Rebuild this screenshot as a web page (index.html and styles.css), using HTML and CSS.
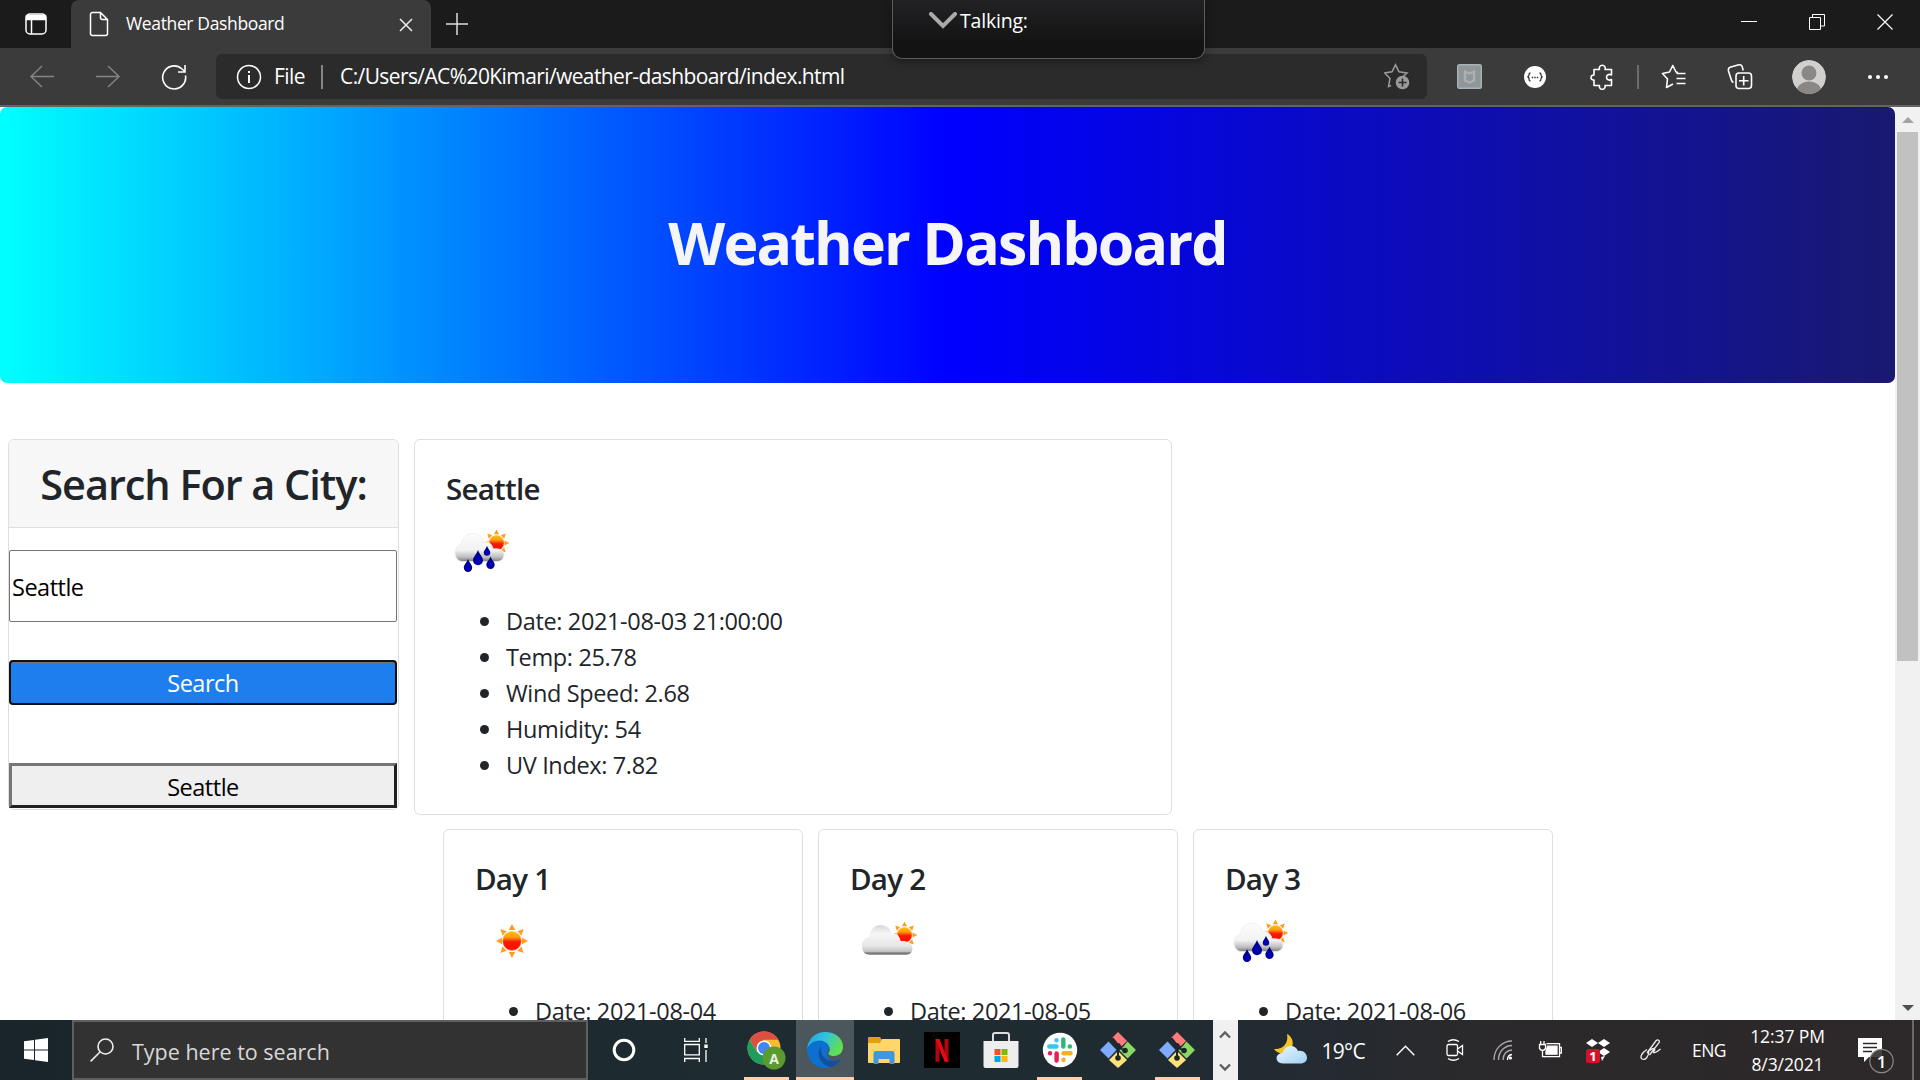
FILE: index.html
```html
<!DOCTYPE html>
<html lang="en">
<head>
<meta charset="utf-8">
<title>Weather Dashboard</title>
<link rel="stylesheet" href="styles.css">
</head>
<body>
<svg class="defs" width="0" height="0">
  <defs>
    <linearGradient id="sunFill" x1="0" y1="0" x2="0" y2="1"><stop offset="0" stop-color="#ffc400"/><stop offset=".3" stop-color="#ff9a10"/><stop offset=".55" stop-color="#f81800"/><stop offset="1" stop-color="#ff0a00"/></linearGradient>
    <linearGradient id="cloudFill" x1="0" y1="0" x2="0" y2="1"><stop offset="0" stop-color="#d8d8d8"/><stop offset=".3" stop-color="#f6f6f6"/><stop offset=".7" stop-color="#e6e6e6"/><stop offset=".88" stop-color="#c4c4c4"/><stop offset=".94" stop-color="#707070"/><stop offset="1" stop-color="#aaa"/></linearGradient>
    <linearGradient id="rainCloudFill" x1="0" y1="0" x2="0" y2="1"><stop offset="0" stop-color="#fcfcfc"/><stop offset=".6" stop-color="#f2f2f2"/><stop offset=".85" stop-color="#bcbcbc"/><stop offset="1" stop-color="#777"/></linearGradient>
    <radialGradient id="dropFill" cx=".5" cy=".65" r=".5"><stop offset="0" stop-color="#0000d8"/><stop offset="1" stop-color="#000078"/></radialGradient>
    <linearGradient id="edgeTop" x1="0" y1="0" x2="1" y2=".4"><stop offset="0" stop-color="#1f9fe0"/><stop offset=".5" stop-color="#2fc3e0"/><stop offset="1" stop-color="#5fe04f"/></linearGradient>
    <linearGradient id="moonCloud" x1="0" y1="0" x2="1" y2="1"><stop offset="0" stop-color="#e8f6ff"/><stop offset="1" stop-color="#9fd2f2"/></linearGradient>
    <g id="sun">
      <path fill="#ff9d1e" d="M0-17l3.200 6h-6.400zM0 17l3.200-6h-6.400zM-16 0l6-3.200v6.400zM16 0l-6-3.200v6.400zM-11.600-12l6.200 2.200-4.200 4.400zM11.600-12l-6.200 2.200 4.200 4.400zM-11.600 12l6.200-2.200-4.200-4.400zM11.600 12l-6.200-2.200 4.200-4.400z"/>
      <circle r="9.400" fill="url(#sunFill)" stroke="#ffae50" stroke-width=".6"/>
    </g>
    <g id="rain">
      <use href="#sun" transform="translate(50.500 29) scale(.8)"/>
      <path fill="url(#rainCloudFill)" stroke="#eee" stroke-width=".8" d="M17 47.500c-5 0-8-4-8-8.600 0-4.500 3-8 6.500-9 .5-6 5-10.500 11-10.500 6 0 10 3.500 11.500 8.500 5-1 8.500 3 9 7 6-.5 11 1 11 5.500 0 4-2.500 7-7 7z"/>
      <g fill="url(#dropFill)">
        <path d="M22 45c1.500 4 4.200 6 4.200 8.800a4.200 4.200 0 0 1-8.400 0C17.800 51 20.500 49 22 45z"/>
        <path d="M32 36c1.800 5 5 7 5 10.200a5 5 0 0 1-10 0C27 43 30.200 41 32 36z"/>
        <path d="M41 32c1.200 3 3.200 4.500 3.200 6.500a3.200 3.200 0 0 1-6.400 0C37.800 36.500 39.800 35 41 32z"/>
        <path d="M44.500 42.500c1.500 4 4.200 5.500 4.200 8.300a4.200 4.200 0 0 1-8.400 0c0-2.800 2.700-4.300 4.200-8.300z"/>
      </g>
    </g>
    <g id="git">
      <g transform="rotate(45 18 18)">
        <rect x="5.500" y="5.500" width="11.500" height="9" rx="1" fill="#ff7b7b"/>
        <rect x="19" y="5.500" width="11.500" height="11.500" rx="1" fill="#7ed957"/>
        <rect x="5.500" y="19" width="11.500" height="11.500" rx="1" fill="#7eaaff"/>
        <rect x="19" y="19" width="11.500" height="11.500" rx="1" fill="#ffe27a"/>
      </g>
      <path d="M12.500 6L18 13v13M18 14.500l6 4" stroke="#1c272c" stroke-width="2.200" fill="none"/>
      <circle cx="18" cy="13.500" r="2.600" fill="#1c272c"/><circle cx="25" cy="18.500" r="2.800" fill="#1c272c"/><circle cx="18" cy="26" r="2.800" fill="#1c272c"/>
    </g>
    <g id="gitTiles">
      <path d="M18 0l9 9-5 5-4-1.500-6-6.500z" fill="#ff7b7b"/>
      <path d="M27.500 9.500L36 18l-8.500 8.500-8-8 4-4z" fill="#8ad762"/>
      <path d="M8.500 9.500l8 8.500-8 8.500L0 18z" fill="#7eaaff"/>
      <path d="M18 19l9 9-9 8-9-8z" fill="#ffe27a"/>
    </g>
  </defs>
</svg>
<div class="screen">
  <header class="tabstrip">
    <div class="tab-menu"><svg width="24" height="24" viewBox="0 0 24 24" fill="none" stroke="#fff" stroke-width="1.500"><rect x="2" y="2" width="20" height="20" rx="4"/><path d="M2.500 3.500h19v4h-19z" fill="#fff"/><path d="M7.500 8v14"/></svg></div>
    <div class="tab">
      <svg width="20" height="26" viewBox="0 0 20 26" fill="none" stroke="#fff" stroke-width="1.500"><path d="M11.500 1.500H3.500a2 2 0 0 0-2 2v19a2 2 0 0 0 2 2h13a2 2 0 0 0 2-2V8.500zv5a2 2 0 0 0 2 2h5"/></svg>
      <span class="t tab-title">Weather Dashboard</span>
      <svg class="tab-close" width="14" height="14" viewBox="0 0 14 14" stroke="#eee" stroke-width="1.500"><path d="M1 1l12 12M13 1L1 13"/></svg>
    </div>
    <div class="new-tab"><svg width="22" height="22" viewBox="0 0 22 22" stroke="#ddd" stroke-width="1.500"><path d="M11 0v22M0 11h22"/></svg></div>
    <div class="window-buttons">
      <svg width="16" height="16" viewBox="0 0 16 16" stroke="#fff" fill="none"><path d="M0 7.500h16"/></svg>
      <svg width="16" height="16" viewBox="0 0 16 16" stroke="#fff" fill="none"><path d="M.5 3.500h11v12H.5zM3.500 3.500v-3h12v11.500h-4"/></svg>
      <svg width="16" height="16" viewBox="0 0 16 16" stroke="#fff" fill="none" stroke-width="1.200"><path d="M.5.5l15 15M15.500.5l-15 15"/></svg>
    </div>
  </header>

  <nav class="toolbar">
    <div><svg width="24" height="24" viewBox="0 0 24 24" fill="none" stroke="#858585" stroke-width="1.400"><path d="M24 11.500H1M12 1L1 11.500l11 10.500"/></svg></div>
    <div><svg width="24" height="24" viewBox="0 0 24 24" fill="none" stroke="#858585" stroke-width="1.400"><path d="M0 11.500h23M12 1l11 10.500L12 22"/></svg></div>
    <div><svg width="26" height="26" viewBox="0 0 26 26" fill="none" stroke="#fff" stroke-width="1.600"><path d="M24.500 11.500A11.500 11.500 0 1 1 21 5l3 2.500M24 1v7h-7"/></svg></div>
    <div class="omnibox">
      <svg width="26" height="26" viewBox="0 0 26 26" fill="none" stroke="#fff" stroke-width="1.500"><circle cx="13" cy="13" r="11.500"/><path d="M13 11v8M13 7v2" stroke-width="2"/></svg>
      <span class="t scheme">File</span>
      <i class="omni-sep"></i>
      <span class="t url">C:/Users/AC%20Kimari/weather-dashboard/index.html</span>
      <svg width="26" height="27" viewBox="0 0 26 27" fill="none" stroke="#9a9a9a" stroke-width="1.500"><path d="M7 22.500l-2.500 1 1.500-8L.8 10 8 8.800l3.500-7 3.500 7 8 1.200-4 3.500"/><circle cx="18.500" cy="19.500" r="6.800" fill="#9a9a9a" stroke="none"/><path d="M18.500 15.500v8M14.500 19.500h8" stroke="#2b2b2b" stroke-width="1.600"/></svg>
    </div>
    <div class="ext"><svg width="25" height="25" viewBox="0 0 25 25"><rect x=".7" y=".7" width="23.600" height="23.600" rx="1.500" fill="#929696" stroke="#a5b3ba" stroke-width="1.400"/><path d="M8 7.500l4.500 2 4.500-2v9l-4.500 2-4.500-2z" fill="none" stroke="#a9b1b4" stroke-width="2.400"/></svg></div>
    <div><svg width="24" height="24" viewBox="0 0 24 24"><circle cx="12" cy="12" r="11" fill="#fff"/><path d="M7.500 8q-1.500 0-1.500 1.700T4.500 12q1.500 0 1.500 2T7.500 16M16.500 8q1.500 0 1.500 1.700t1.500 2.300q-1.500 0-1.500 2t-1.500 2" fill="none" stroke="#333" stroke-width="1.300"/><path d="M8.800 12.500h1.400M11.300 12.500h1.400M13.800 12.500h1.400" stroke="#333" stroke-width="1.300"/></svg></div>
    <div><svg width="24" height="26" viewBox="0 0 24 26" fill="none" stroke="#fff" stroke-width="1.600" stroke-linejoin="round"><path d="M4 5.500h5.500a3 3 0 1 1 5.500 0h6.500v5.500c-2.500-1.500-5 0-5 2.200s2.500 3.800 5 2.300v6H15a2.900 2.900 0 1 1-5.500 0H4v-5.500c-4 .5-4-5 0-5z"/></svg></div>
    <i class="bar-sep"></i>
    <div><svg width="26" height="25" viewBox="0 0 26 25" fill="none" stroke="#fff" stroke-width="1.600" stroke-linejoin="round"><path d="M17 8.500L15 8l-3.200-6.500L8.500 8 1.500 9.500l5 5.500-1 8.500 6.500-3.500M15.500 9.500h9M15.500 14.500h9M15.500 19.500h9"/></svg></div>
    <div><svg width="26" height="26" viewBox="0 0 26 26" fill="none" stroke="#fff" stroke-width="1.600"><rect x="9" y="9" width="15.500" height="15.500" rx="3"/><path d="M16.700 12v9.500M12 16.700h9.500M6.500 18.500C5 18 4.500 17 4.200 15.500L1.500 7c-.5-2 0-3 1.500-3.700L11 1c2-.5 3.500 0 4.200 1.500l1 4"/></svg></div>
    <div><svg width="34" height="34" viewBox="0 0 34 34"><clipPath id="avatarClip"><circle cx="17" cy="17" r="17"/></clipPath><g clip-path="url(#avatarClip)"><circle cx="17" cy="17" r="17" fill="#d2d0ce"/><circle cx="17" cy="13" r="7.500" fill="#8a8785"/><ellipse cx="17" cy="32" rx="12.500" ry="10.500" fill="#8a8785"/></g></svg></div>
    <div><svg width="24" height="8" viewBox="0 0 24 8" fill="#fff"><circle cx="4" cy="4" r="2"/><circle cx="12" cy="4" r="2"/><circle cx="20" cy="4" r="2"/></svg></div>
  </nav>

  <div class="talking">
    <svg width="28" height="17" viewBox="0 0 28 17" fill="none" stroke="#aaa" stroke-width="4" stroke-linecap="round"><path d="M2 2l12 12L26 2"/></svg>
    <span class="t talk-text">Talking:</span>
  </div>

  <div class="viewport">
    <main class="page">
      <h1 class="banner"><span class="t">Weather Dashboard</span></h1>
      <div class="columns">
        <aside class="search-card">
          <h2><span class="t">Search For a City:</span></h2>
          <div class="field"><span class="t">Seattle</span></div>
          <div class="search-btn"><span class="t">Search</span></div>
          <div class="history-btn"><span class="t">Seattle</span></div>
        </aside>
        <section class="results">
          <article class="card current">
            <h3><span class="t">Seattle</span></h3>
            <svg class="wx" viewBox="0 0 75 75"><use href="#rain"/></svg>
            <ul>
              <li><span class="t">Date: 2021-08-03 21:00:00</span></li>
              <li><span class="t">Temp: 25.78</span></li>
              <li><span class="t">Wind Speed: 2.68</span></li>
              <li><span class="t">Humidity: 54</span></li>
              <li><span class="t">UV Index: 7.82</span></li>
            </ul>
          </article>
          <div class="forecast">
            <article class="card">
              <h3><span class="t">Day 1</span></h3>
              <svg class="wx" viewBox="0 0 75 75"><use href="#sun" x="37" y="37"/></svg>
              <ul><li><span class="t">Date: 2021-08-04</span></li></ul>
            </article>
            <article class="card">
              <h3><span class="t">Day 2</span></h3>
              <svg class="wx" viewBox="0 0 75 75"><use href="#sun" transform="translate(54.500 31) scale(.8)"/><path fill="url(#cloudFill)" d="M20 51c-5 0-8-3.500-8-9 0-5 3-8.500 7-9 .5-6 5-12 11.500-12 6 0 10 4 11 8.500 5-1 8.500 3 9 7.500 6-.5 12 2 12 7 0 4.500-3 7-7.500 7z"/></svg>
              <ul><li><span class="t">Date: 2021-08-05</span></li></ul>
            </article>
            <article class="card">
              <h3><span class="t">Day 3</span></h3>
              <svg class="wx" viewBox="0 0 75 75"><use href="#rain"/></svg>
              <ul><li><span class="t">Date: 2021-08-06</span></li></ul>
            </article>
          </div>
        </section>
      </div>
    </main>
    <div class="scrollbar">
      <svg width="12" height="6" viewBox="0 0 12 6"><path d="M0 6l6-6 6 6z" fill="#a3a3a3"/></svg>
      <i class="thumb"></i>
      <svg width="12" height="6" viewBox="0 0 12 6"><path d="M0 0l6 6 6-6z" fill="#505050"/></svg>
    </div>
  </div>

  <footer class="taskbar">
    <div><svg width="24" height="24" viewBox="0 0 24 24" fill="#fff"><path d="M0 3.300l10-1.400v9.600H0zM11 1.700L24 0v11.500H11zM0 12.500h10v9.600L0 20.700zM11 12.500h13V24l-13-1.700z"/></svg></div>
    <div class="task-search">
      <svg width="24" height="24" viewBox="0 0 24 24" fill="none" stroke="#eee" stroke-width="1.600"><circle cx="15.500" cy="8.500" r="7.500"/><path d="M10 14L.6 23.400"/></svg>
      <span class="t">Type here to search</span>
    </div>
    <div><svg width="24" height="24" viewBox="0 0 24 24"><circle cx="12" cy="12" r="9.800" fill="none" stroke="#fff" stroke-width="3"/></svg></div>
    <div class="task-view"><svg width="24" height="24" viewBox="0 0 24 24" fill="none" stroke="#fff" stroke-width="1.300"><path d="M.7 0v3.300h14.600V0M.7 6.500h14.600v10.300H.7zM.7 24v-3.500h14.600V24M22 0v5M22 12v12"/><path d="M20.300 6.500h3.400v3.500h-3.400z" fill="#fff" stroke="none"/></svg></div>
    <div class="app open"><svg width="40" height="40" viewBox="0 0 40 40"><circle cx="18" cy="18" r="16.500" fill="#fbbc30"/><path d="M3.700 9.800a16.500 16.500 0 0 1 28.600 0H18l-7 12z" fill="#dd4f43"/><path d="M3.700 9.800A16.500 16.500 0 0 0 18 34.500l7-12.500-14 0z" fill="#1e9e5e"/><circle cx="18" cy="18" r="7.500" fill="#fff"/><circle cx="18" cy="18" r="6" fill="#4285f4"/><circle cx="28" cy="28" r="11.500" fill="#5a9a2e"/><text x="28" y="33.500" text-anchor="middle" class="badge-a">A</text></svg></div>
    <div class="app open active"><svg width="36" height="36" viewBox="0 0 36 36"><path d="M0 18C2 8 9 5.500 15 6c8 1 9 7 7 10-5 7 0 17 12 11-3 5-9 9-16 9C8 36 0 28 0 18z" fill="#0d6fd0"/><path d="M0 17C1 7 8 0 18 0c10 0 18 6 18 14.500 0 6-4 9.500-9 9.500-4 0-6-1.500-5.500-3 2-2 1.500-5 0-8C17 6 4 7 0 17z" fill="url(#edgeTop)"/><path d="M14 14c-5 8-1 20 11 21 4-2 7-4.500 9-8-10 5-22 0-20-13z" fill="#124f9c"/></svg></div>
    <div class="app"><svg width="34" height="28" viewBox="0 0 34 28"><path d="M1 2q0-1 1-1h11l2 3v5H1z" fill="#e0a010"/><path d="M1 7h12l2-4h17q1 0 1 1v22q0 1-1 1H2q-1 0-1-1z" fill="#ffd668"/><path d="M6.500 28V17q0-2 2-2h17q2 0 2 2v11h-5v-5h-11v5z" fill="#3f97e0"/></svg></div>
    <div class="app"><svg width="36" height="36" viewBox="0 0 36 36"><path d="M0 0h36v36H0z" fill="#000"/><path d="M11.500 7h4v22.500l-4 .5zM20.500 7h4v23l-4-.5z" fill="#b1060f"/><path d="M11.500 7h4l9 23-4-.5z" fill="#e50914"/></svg></div>
    <div class="app"><svg width="36" height="36" viewBox="0 0 36 36"><path d="M10 11V3q0-2 2-2h12q2 0 2 2v8" fill="none" stroke="#ddd" stroke-width="2"/><path d="M.5 9h35v25q0 2-2 2h-31q-2 0-2-2z" fill="#eee"/><path d="M11.500 17h6v6h-6z" fill="#f25022"/><path d="M18.500 17h6v6h-6z" fill="#7fba00"/><path d="M11.500 24h6v6h-6z" fill="#00a4ef"/><path d="M18.500 24h6v6h-6z" fill="#ffb900"/></svg></div>
    <div class="app open"><svg width="36" height="36" viewBox="0 0 36 36"><circle cx="18" cy="18" r="17.200" fill="#fff"/><g stroke-width="4.400" stroke-linecap="round"><path d="M7.300 14.500h7.200M14.500 8.200v.1" stroke="#36c5f0"/><path d="M21.300 7.500v7M27.800 14.500h.1" stroke="#2eb67d"/><path d="M21.500 21.300h7M21.500 27.800v.1" stroke="#ecb22e"/><path d="M14.600 21.500v7M8 21.300h.1" stroke="#e01e5a"/></g></svg></div>
    <div class="app"><svg width="36" height="36" viewBox="0 0 36 36"><use href="#gitTiles"/><path d="M12.500 6L18 13v13M18 14.500l6 4" stroke="#1c272c" stroke-width="2" fill="none"/><circle cx="18" cy="13.500" r="2.600" fill="#1c272c"/><circle cx="25" cy="18.500" r="2.800" fill="#1c272c"/><circle cx="18" cy="26" r="2.800" fill="#1c272c"/></svg></div>
    <div class="app open"><svg width="36" height="36" viewBox="0 0 36 36"><use href="#gitTiles"/><path d="M12.500 6L18 13v13M18 14.500l6 4" stroke="#1c272c" stroke-width="2" fill="none"/><circle cx="18" cy="13.500" r="2.600" fill="#1c272c"/><circle cx="25" cy="18.500" r="2.800" fill="#1c272c"/><circle cx="18" cy="26" r="2.800" fill="#1c272c"/></svg></div>
    <div class="task-scroll">
      <svg width="12" height="9" viewBox="0 0 12 9" fill="none" stroke="#606060" stroke-width="2.400"><path d="M1 7.500l5-5 5 5"/></svg>
      <svg width="12" height="9" viewBox="0 0 12 9" fill="none" stroke="#606060" stroke-width="2.400"><path d="M1 1.500l5 5 5-5"/></svg>
    </div>
    <div class="tray-weather"><svg width="34" height="30" viewBox="0 0 34 30"><path d="M13 0c8 4 8 16-2 19C6 20 2 18 0 15c8 1 15-5 13-15z" fill="#f7c325"/><path d="M9 29.500c-9 0-8-11 0-10.500 1-8 12-10 15-2 10-2 13 12.500 2 12.500z" fill="url(#moonCloud)"/></svg></div>
    <div class="temp"><span class="t">19°C</span></div>
    <div><svg width="19" height="11" viewBox="0 0 19 11" fill="none" stroke="#fff" stroke-width="1.400"><path d="M.7 10.300l8.800-9 8.800 9"/></svg></div>
    <div><svg width="18" height="24" viewBox="0 0 18 24" fill="none" stroke="#fff" stroke-width="1.300"><rect x="1" y="6.500" width="10.500" height="11" rx="1.500"/><path d="M11.500 11l5-3.500v9l-5-3.500M2 3.500q5-3.500 11 0M2 20.500q5 3.500 11 0"/></svg></div>
    <div><svg width="20" height="20" viewBox="0 0 20 20" fill="none" stroke="#aaa" stroke-width="1.400"><path d="M1 20C1 9 9 1 19 1M5.500 20C5.500 11.500 11.500 5.500 19 5.500M10 20c0-6 4-10 9-10"/><path d="M14.500 20q0-5 4.500-5.500" stroke="#fff"/><circle cx="17.500" cy="18" r="1.600" fill="#fff" stroke="none"/></svg></div>
    <div><svg width="24" height="18" viewBox="0 0 24 18" fill="none" stroke="#fff" stroke-width="1.300"><path d="M8.500 2.700h13v13H6"/><path d="M9.500 5.200h9.500v8H8v-3z" fill="#fff"/><path d="M22 6.500h1.300v5.500H22M1.500 3.500h6v4q-3 4-6 0zM2.700 0v3.500M6 0v3.500M4.500 9.500V15.700H7"/></svg></div>
    <div><svg width="26" height="26" viewBox="0 0 26 26"><path d="M7 2l6 4-6 4-6-4zM19 2l6 4-6 4-6-4zM19 11l6 4-6 4-6-4zM16 20l4-1-3 5z" fill="#fff"/><rect x="1" y="12" width="14" height="14" rx="2.500" fill="#d80f2b"/><text x="8" y="23.800" text-anchor="middle" class="badge-n">1</text></svg></div>
    <div><svg width="22" height="22" viewBox="0 0 22 22" fill="none" stroke="#eee" stroke-width="1.300"><path d="M7 14L16 1.800q1.500-1.500 2.700-.6t.1 2.800L9.500 16M10 11.500c4-3.500 6-2 4 .5s1.500 2.500 6.500-2M7 10.500c-5 3-7.500 7.500-5 9.500 3.500 1.500 6.500-2 7-8.500"/></svg></div>
    <div class="lang"><span class="t">ENG</span></div>
    <div class="clock"><span class="t">12:37 PM</span><span class="t">8/3/2021</span></div>
    <div class="notify"><svg width="40" height="38" viewBox="0 0 40 38"><path d="M2 1h24v19H13l-5 5v-5H2z" fill="#fff"/><path d="M7 6.500h14M7 10.500h14M7 14.500h9" stroke="#2c2828" stroke-width="1.300"/><circle cx="25.500" cy="24" r="11.700" fill="#2c2828" fill-opacity=".88" stroke="#8a8888" stroke-width="1.200"/><text x="25.500" y="30.500" text-anchor="middle" class="badge-c">1</text></svg></div>
    <i class="peek"></i>
  </footer>
</div>
</body>
</html>
```
FILE: styles.css
```css
* { box-sizing: border-box; }
body {
  margin: 0;
  font-family: "Open Sans", "Noto Sans", sans-serif;
  color: #212529;
  background: #fff;
  overflow: hidden;
}
svg { display: block; flex: none; }
.defs { position: absolute; }
.t { white-space: nowrap; }
h1, h2, h3, ul { margin: 0; padding: 0; }

.screen {
  position: relative;
  width: 1920px;
  height: 1080px;
  display: grid;
  grid-template-rows: 48px 59px 913px 60px;
  overflow: hidden;
}

/* Tab strip */
.tabstrip {
  display: grid;
  grid-template-columns: 71px 360px 52px 1fr;
  background: #1b1b1b;
  color: #fff;
}
.tab-menu, .new-tab { display: flex; align-items: center; justify-content: center; }
.tab-menu { padding-left: 1px; background: #1b1b1b; }
.tab {
  display: flex;
  align-items: center;
  padding: 0 18px 0 18px;
  background: #3b3b3b;
  border-radius: 8px 8px 0 0;
}
.tab-title { margin-left: 17px; padding-bottom: 2px; font-size: 17.5px; letter-spacing: -.36px; }
.tab-close { margin-left: auto; margin-top: 2px; }
.new-tab { padding-bottom: 1px; }
.window-buttons {
  display: flex;
  justify-content: flex-end;
  align-items: center;
  gap: 52px;
  padding: 0 27px 4px 0;
}

/* Toolbar */
.toolbar {
  display: grid;
  grid-template-columns: 84px 48px 84px 1211px 76px 64px 70px 2px 70px 62px 76px 62px;
  background: #3b3b3b;
  border-bottom: 2px solid #636363;
  color: #fff;
}
.toolbar > div { display: flex; align-items: center; justify-content: center; }
.toolbar > .ext { padding-left: 8px; }
.toolbar > .omnibox {
  display: grid;
  grid-template-columns: 38px 47px 2px 1fr 26px;
  justify-content: start;
  margin: 6px 0;
  padding: 0 17px 0 20px;
  background: #2b2b2b;
  border-radius: 6px;
  font-size: 21px;
  letter-spacing: -.6px;
}
.scheme, .url { padding-bottom: 1px; }
.omni-sep { width: 2px; height: 24px; background: #858585; }
.url { padding-left: 17px; }
.bar-sep { width: 2px; height: 24px; background: #6c6c6c; align-self: center; }

/* Call overlay */
.talking {
  position: absolute;
  left: 892px;
  top: 0;
  width: 313px;
  height: 59px;
  display: flex;
  align-items: flex-start;
  padding: 12px 0 0 36px;
  gap: 3px;
  color: #fff;
  background: linear-gradient(#222224, #131314 75%);
  border: 1px solid #5c5c5c;
  border-top: 0;
  border-radius: 0 0 10px 10px;
  box-shadow: 0 3px 10px rgba(0, 0, 0, .35);
}
.talk-text { font-size: 19.5px; line-height: 18px; letter-spacing: -.2px; }

/* Page */
.viewport { display: grid; grid-template-columns: 1895px 25px; overflow: hidden; min-height: 0; }
.page { overflow: hidden; height: 913px; }
.banner {
  height: 276px;
  padding-top: 99px;
  text-align: center;
  font-size: 59px;
  line-height: 72px;
  font-weight: 700;
  letter-spacing: -1.85px;
  color: whitesmoke;
  border-radius: 7px;
  background: linear-gradient(to right, aqua, blue, midnightblue);
}
.columns { display: grid; grid-template-columns: 391px 1fr; column-gap: 15px; padding: 56px 0 0 8px; align-items: start; }
.search-card {
  height: 371px;
  border: 1px solid #dfdfdf;
  border-radius: 6px;
  padding-right: 1px;
  font-size: 23.5px;
  letter-spacing: -.5px;
  text-align: center;
}
.search-card h2 {
  height: 88px;
  margin-right: -1px;
  line-height: 89px;
  font-size: 41.5px;
  font-weight: 600;
  letter-spacing: -1.05px;
  background: #f7f7f7;
  border-bottom: 1px solid #dfdfdf;
  border-radius: 5px 5px 0 0;
}
.field {
  height: 72px;
  margin-top: 22px;
  padding: 1px 0 0 2px;
  line-height: 71px;
  text-align: left;
  color: #000;
  border: 1px solid #767676;
  border-radius: 2px;
}
.search-btn {
  height: 45px;
  margin-top: 38px;
  line-height: 43px;
  color: #fff;
  background: #1f7eed;
  border: 2px solid #101010;
  border-radius: 4px;
  box-shadow: inset 0 1px #76716a;
}
.history-btn {
  height: 45px;
  margin-top: 58px;
  line-height: 42px;
  color: #000;
  background: #efefef;
  border: 3px solid;
  border-color: #767676 #212121 #212121 #767676;
}

.card { border: 1px solid #dfdfdf; border-radius: 6px; padding: 30px 30px 30px 31px; background: #fff; }
.current { width: 758px; height: 376px; }
.card h3 { height: 36px; font-size: 29.5px; line-height: 38px; font-weight: 600; letter-spacing: -.75px; }
.wx { width: 75px; height: 75px; margin: 8px 0 14px; }
.card ul { list-style: none; padding-left: 60px; font-size: 23.5px; line-height: 36px; letter-spacing: -.36px; }
.card li::before {
  content: "";
  display: inline-block;
  width: 9px;
  height: 9px;
  margin: 0 17px 0 -26px;
  vertical-align: 4px;
  border-radius: 50%;
  background: #212529;
}
.forecast { display: grid; grid-template-columns: repeat(3, 360px); column-gap: 15px; padding: 14px 0 0 29px; }
.forecast .card { height: 376px; }

.scrollbar {
  display: grid;
  grid-template-rows: 25px 529px 1fr;
  justify-items: center;
  background: #f1f1f1;
}
.scrollbar svg:first-child { align-self: center; margin-top: 1px; }
.scrollbar svg:last-child { align-self: end; margin-bottom: 9px; }
.thumb { width: 21px; background: #c1c1c1; }

/* Taskbar */
.taskbar {
  display: grid;
  grid-template-columns: 72px 516px 72px 77px repeat(8, 58.7px) 25px 88px 56px 60px 38px 59px 34px 62px 45px 71px 86px 81px 2px;
  background: linear-gradient(90deg, #19252b, #1e2c32 40%, #1f2b31 60%, #232b32 67%, #2b292b 78%, #2d2829);
  color: #fff;
}
.taskbar > div { display: flex; align-items: center; justify-content: center; position: relative; }
.taskbar > .task-search {
  justify-content: flex-start;
  gap: 18px;
  padding-left: 16px;
  background: #323232;
  border: 2px solid #5f5f5f;
  color: #d8d8d8;
  font-size: 21.5px;
}
.task-search .t { padding-top: 2px; }
.taskbar > .task-view { padding-right: 5px; }
.app.open::after { content: ""; position: absolute; left: 7px; right: 7px; bottom: 0; height: 3px; background: #fdcfac; }
.app.active { background: #4b575c; }
.app.active::after { left: 0; right: 0; }
.taskbar > .task-scroll { flex-direction: column; justify-content: space-between; padding: 10px 0 8px; background: #f0f0f0; margin: 0 -6px 0 6px; }
.taskbar > .tray-weather { padding: 0 0 2px 30px; }
.taskbar > .temp { justify-content: flex-start; padding: 2px 0 0 2px; font-size: 21px; letter-spacing: -.7px; }
.lang { font-size: 17.5px; letter-spacing: -.6px; }
.taskbar > .clock { flex-direction: column; font-size: 17.5px; line-height: 28px; letter-spacing: -.1px; }
.taskbar > .notify { justify-content: flex-start; padding: 12px 0 0 25px; }
.peek { width: 2px; background: #6b6868; }
.badge-a { font: 700 14px "Open Sans", sans-serif; fill: #e8f0e0; }
.badge-n { font: 700 13px "Open Sans", sans-serif; fill: #fff; }
.badge-c { font: 600 17px "Open Sans", sans-serif; fill: #fff; }
```
